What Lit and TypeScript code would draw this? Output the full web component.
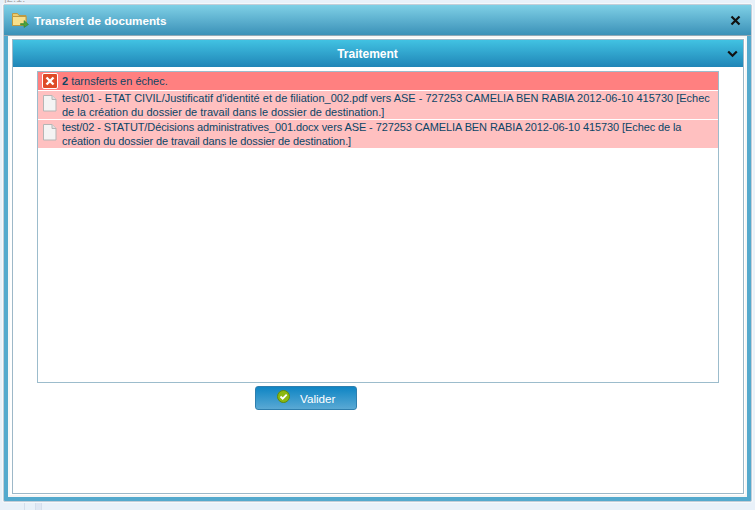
import { LitElement, html, css } from "lit";
import { customElement } from "lit/decorators.js";

const fileIcon = html`<svg class="file" width="16" height="18" viewBox="0 0 16 18"><path d="M1.500 1.500h8.500l4 4v11.500h-12.500z" fill="#f4f4f4" stroke="#b5b5b5"/><path d="M10 1.500v4h4" fill="#e0e0e0" stroke="#b5b5b5"/></svg>`;

@customElement("app-root")
export class AppRoot extends LitElement {
  static styles = css`
    :host { display: block; width: 755px; height: 510px; overflow: hidden; font-family: "Liberation Sans", Arial, sans-serif; }
    .page { position: relative; box-sizing: border-box; height: 510px; padding: 4px 3px 8px 3px; display: flex;
      background:
        linear-gradient(90deg, transparent 24px, #d5dfec 24px, #d5dfec 25px, transparent 25px, transparent 35px, #d5dfec 35px, #d5dfec 36px, #dfe7f3 36px, #dfe7f3 41px, #d5dfec 41px, #d5dfec 42px, transparent 42px) 0 100% / 100% 8px no-repeat,
        #e9f1f9; }
    .scrap { position: absolute; left: 4px; top: -8px; font-size: 11px; color: #a9a9a9; }
    .window { position: relative; flex: 1; display: flex; flex-direction: column; background: #54a9cd; border: 1px solid #c3ced8; border-radius: 2px; box-shadow: 0 0 0 1px #f5f8fb; }
    .title { height: 31px; flex: none; display: flex; align-items: center; gap: 5px; padding: 0 10px 0 8px; background: linear-gradient(#7fd0e6, #3b91b8); border-bottom: 1px solid #93a9b5; box-sizing: border-box; }
    .title span { flex: 1; font-size: 11.700px; font-weight: bold; color: #fff; }
    .body { flex: 1; display: flex; background: #fff; margin: 0 4px 4px; padding: 3px 3px 3px 4px; box-shadow: inset 0 0 0 2px #f6f6f6; }
    .panel { flex: 1; display: flex; flex-direction: column; border: 1px solid #9db8c8; background: #fff; }
    .head { height: 27px; flex: none; display: flex; align-items: center; background: linear-gradient(#41c2e2, #2085b7); position: relative; justify-content: center; padding-right: 21px; color: #fff; font-size: 12px; font-weight: bold; }
    .head svg { position: absolute; right: 5px; top: 10px; }
    .content { flex: 1; padding: 4px 24px 0 24px; display: flex; flex-direction: column; align-items: stretch; }
    .list { height: 312px; box-sizing: border-box; border: 1px solid #9cbccc; background: #fff; }
    .summary { height: 18px; background: #ff8080; display: flex; align-items: center; gap: 4px; padding-left: 4px; font-size: 11px; color: #0f4463; border-bottom: 1px solid #fff; }
    .row { display: flex; gap: 4px; background: #ffc0c0; padding: 0 4px; height: 28px; border-bottom: 1px solid #fff; color: #0b4566; font-size: 11px; line-height: 14px; }
    .row:last-child { border-bottom: 0; letter-spacing: -0.1px; }
    .file { flex: none; margin-top: 3px; }
    .actions { padding: 3px 0 0 218px; }
    button { width: 102px; height: 24px; padding: 0; border: 1px solid #2f7fae; border-radius: 3px; background: linear-gradient(#0f85c4, #5aa9d4); color: #fff; font: 11.700px "Liberation Sans", Arial, sans-serif; display: flex; align-items: center; }
    button svg { margin: -4px 0 0 21px; }
    button span { margin-left: 10px; }
  `;

  render() {
    return html`<div class="page"><span class="scrap">|2.1:</span><div class="window">
      <div class="title">
        <svg width="17" height="16" viewBox="0 0 17 16"><path d="M.5 1.500h5l1.500 2h7v10h-13.500z" fill="#eccb6b" stroke="#bd9a42"/><path d="M.5 4.500h13.500v9h-13.500z" fill="#f7e08c" stroke="#bd9a42"/><path d="M8.500 11.500h3.500v-3l4.500 4-4.500 3v-2.500h-3.500z" fill="#4ba23c" stroke="#2f7d26" stroke-width=".5"/></svg>
        <span>Transfert de documents</span>
        <svg width="11" height="11" viewBox="0 0 11 11"><path d="M1.500 1.500l8 8M9.500 1.500l-8 8" stroke="#111" stroke-width="2.200"/></svg>
      </div>
      <div class="body"><div class="panel">
        <div class="head">Traitement
          <svg width="11" height="8" viewBox="0 0 11 8"><path d="M1.200 1.500l4.300 4.300 4.300-4.300" fill="none" stroke="#111" stroke-width="2.200"/></svg>
        </div>
        <div class="content">
          <div class="list">
            <div class="summary">
              <svg width="16" height="16" viewBox="0 0 16 16"><rect x=".5" y=".5" width="15" height="15" rx="1.500" fill="#de4b28" stroke="#fff"/><path d="M4.500 4.500l7 7M11.500 4.500l-7 7" stroke="#fff" stroke-width="2.400"/></svg>
              <div><b>2</b> tarnsferts en échec.</div>
            </div>
            <div class="row">${fileIcon}<div>test/01 - ETAT CIVIL/Justificatif d'identité et de filiation_002.pdf vers ASE - 727253 CAMELIA BEN RABIA 2012-06-10 415730 [Echec de la création du dossier de travail dans le dossier de destination.]</div></div>
            <div class="row">${fileIcon}<div>test/02 - STATUT/Décisions administratives_001.docx vers ASE - 727253 CAMELIA BEN RABIA 2012-06-10 415730 [Echec de la création du dossier de travail dans le dossier de destination.]</div></div>
          </div>
          <div class="actions">
            <button>
              <svg width="13" height="13" viewBox="0 0 13 13"><circle cx="6.500" cy="6.500" r="6" fill="#8cb811" stroke="#5f8a0c"/><path d="M3.500 6.500l2.200 2.200 4-4" fill="none" stroke="#fff" stroke-width="1.800"/></svg>
              <span>Valider</span>
            </button>
          </div>
        </div>
      </div></div>
    </div></div>`;
  }
}
